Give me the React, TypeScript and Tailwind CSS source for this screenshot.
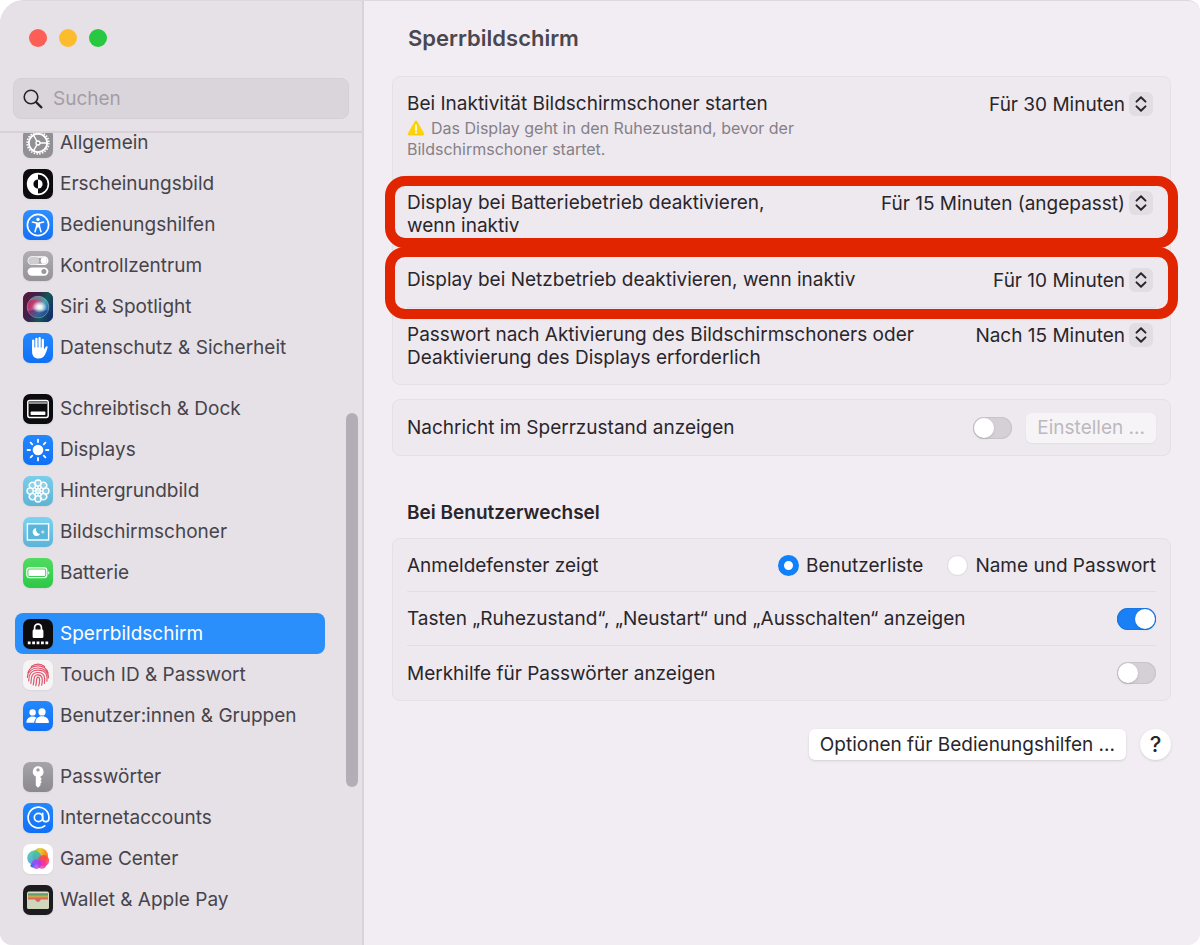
import { useId, useState, type ReactNode } from "react";
import { AtSign } from "lucide-react";
import { clsx } from "clsx";

function GearIcon() {
  return (
    <svg viewBox="0 0 30 30" className="h-full w-full" fill="none" stroke="white">
      <circle cx="15" cy="15" r="10.9" strokeWidth="1.6" strokeDasharray="1.5 1.354" />
      <circle cx="15" cy="15" r="9.2" strokeWidth="1.9" />
      <circle cx="15" cy="15" r="2" strokeWidth="1.3" />
      <path d="M17 15H24M14 13.3L10.5 7.2M14 16.7L10.5 22.8" strokeWidth="1.4" />
    </svg>
  );
}

function AppearanceIcon() {
  return (
    <svg viewBox="0 0 30 30" className="h-full w-full">
      <circle cx="15" cy="15" r="10.4" fill="none" stroke="white" strokeWidth="1.6" />
      <path d="M15 4.6a10.4 10.4 0 0 0 0 20.8v-5.8a4.6 4.6 0 0 1 0-9.2z" fill="white" />
      <path d="M15 10.4a4.6 4.6 0 0 1 0 9.2z" fill="white" />
    </svg>
  );
}

function AccessibilityIcon() {
  return (
    <svg viewBox="0 0 30 30" className="h-full w-full">
      <circle cx="15" cy="15" r="10.6" fill="none" stroke="white" strokeWidth="1.7" />
      <circle cx="15" cy="9.4" r="1.7" fill="white" />
      <path
        d="M9.4 12.1L13.6 13v3.2L12 21.8M20.6 12.1L16.4 13v3.2L18 21.8"
        fill="none"
        stroke="white"
        strokeWidth="1.5"
        strokeLinecap="round"
        strokeLinejoin="round"
      />
      <path d="M13.2 12.4h3.6v5.2h-3.6z" fill="white" />
    </svg>
  );
}

function ControlCenterIcon() {
  return (
    <svg viewBox="0 0 30 30" className="h-full w-full">
      <rect x="5.2" y="6" width="19.6" height="7.4" rx="3.7" fill="#a5a3a7" stroke="white" strokeWidth="1.3" />
      <rect x="5.2" y="6" width="11" height="7.4" rx="3.7" fill="#cfcdd1" />
      <circle cx="20.8" cy="9.7" r="3.1" fill="white" />
      <rect x="4.6" y="16.4" width="20.8" height="8.4" rx="4.2" fill="white" />
      <circle cx="20.9" cy="20.6" r="2.5" fill="#99979b" />
    </svg>
  );
}

function SiriIcon() {
  return (
    <svg viewBox="0 0 30 30" className="h-full w-full">
      <defs>
        <linearGradient id="siri-base" x1="0" y1="0.2" x2="1" y2="0.6">
          <stop offset="0" stopColor="#5a1638" />
          <stop offset="0.4" stopColor="#3a2350" />
          <stop offset="0.7" stopColor="#155654" />
          <stop offset="1" stopColor="#12306a" />
        </linearGradient>
        <linearGradient id="siri-orb" x1="0" y1="0.2" x2="1" y2="0.7">
          <stop offset="0" stopColor="#c22257" />
          <stop offset="0.4" stopColor="#d9588f" />
          <stop offset="0.65" stopColor="#4fb3c0" />
          <stop offset="1" stopColor="#2d62c8" />
        </linearGradient>
        <radialGradient id="siri-glow">
          <stop offset="0" stopColor="white" />
          <stop offset="0.35" stopColor="white" stopOpacity="0.85" />
          <stop offset="1" stopColor="white" stopOpacity="0" />
        </radialGradient>
      </defs>
      <rect width="30" height="30" fill="url(#siri-base)" />
      <circle cx="15" cy="15" r="10.8" fill="url(#siri-orb)" fillOpacity="0.85" stroke="white" strokeOpacity="0.3" />
      <path d="M6 9c5-6 14-6 18 0-5-2-12-2-18 0z" fill="#27b3a0" fillOpacity="0.6" />
      <path d="M5 19c4-1 8-2 11-1 4 1 6 1 9 0-2 8-15 12-20 1z" fill="#1c2a77" fillOpacity="0.5" />
      <ellipse cx="16.5" cy="15" rx="7.6" ry="6" fill="url(#siri-glow)" />
    </svg>
  );
}

function HandIcon() {
  return (
    <svg viewBox="0 0 30 30" className="h-full w-full">
      <path
        d="M10.2 7.6v9M13.4 5.8v10M16.6 5.2v10M19.8 7v10"
        fill="none"
        stroke="white"
        strokeWidth="2.3"
        strokeLinecap="round"
      />
      <path
        d="M9.05 14.4h11.9v2.2l1.7-2.7c.6-1 2.4-.7 1.9.9-.6 2.300-1.400 4.600-2.500 6.600-1.300 2.500-3.300 4.100-6.350 4.100-4.300 0-6.650-2.900-6.650-7.100z"
        fill="white"
      />
    </svg>
  );
}

function DockIcon() {
  return (
    <svg viewBox="0 0 30 30" className="h-full w-full">
      <rect x="4.8" y="6.6" width="20.4" height="16.8" rx="1.8" fill="none" stroke="white" strokeWidth="1.5" />
      <path d="M5.500 8.700h19" stroke="#8d8b8f" strokeWidth="2.400" />
      <rect x="7.6" y="17.6" width="14.800" height="3.400" rx="0.8" fill="white" />
    </svg>
  );
}

function DisplaysIcon() {
  return (
    <svg viewBox="0 0 30 30" className="h-full w-full">
      <circle cx="15" cy="15" r="5.300" fill="white" />
      <path
        d="M15 4.600v2.400M15 23v2.400M4.600 15H7M23 15h2.400M7.600 7.600l1.700 1.700M20.700 20.700l1.700 1.700M22.400 7.600l-1.700 1.700M9.300 20.700l-1.700 1.700"
        stroke="white"
        strokeWidth="1.800"
        strokeLinecap="round"
      />
    </svg>
  );
}

function WallpaperIcon() {
  return (
    <svg viewBox="0 0 30 30" className="h-full w-full" fill="white" fillOpacity="0.2" stroke="white" strokeWidth="1.4">
      {[0, 45, 90, 135, 180, 225, 270, 315].map((angle) => (
        <g key={angle} transform={`rotate(${angle} 15 15)`}>
          <circle cx="15" cy="7.1" r="3.1" />
          <path d="M15 10.2V13" />
        </g>
      ))}
      <circle cx="15" cy="15" r="2.4" fillOpacity="0.7" />
    </svg>
  );
}

function ScreensaverIcon() {
  return (
    <svg viewBox="0 0 30 30" className="h-full w-full">
      <rect x="4.400" y="6.800" width="21.200" height="16.200" fill="#58b5dc" stroke="white" strokeWidth="1.4" />
      <path d="M13.2 10.9a4.1 4.1 0 1 0 4 6.2 4.6 4.6 0 0 1-4-6.2z" fill="white" />
      <path d="M19.8 12.400l.7 1.9 1.9.7-1.9.7-.7 1.9-.7-1.9-1.9-.7 1.9-.7z" fill="white" fillOpacity="0.7" />
    </svg>
  );
}

function BatteryIcon() {
  return (
    <svg viewBox="0 0 30 30" className="h-full w-full">
      <rect x="3.8" y="9.9" width="20" height="9.8" rx="2.6" fill="none" stroke="white" strokeWidth="1.2" />
      <rect x="5.4" y="11.5" width="16.8" height="6.6" rx="1.2" fill="white" />
      <path d="M25.2 13.2c1.6.5 1.6 2.7 0 3.2z" fill="white" />
    </svg>
  );
}

function LockIcon() {
  return (
    <svg viewBox="0 0 30 30" className="h-full w-full" fill="white">
      <path d="M11.6 11.4V8.600a3.400 3.400 0 0 1 6.800 0v2.800" fill="none" stroke="white" strokeWidth="1.7" />
      <rect x="9.600" y="10.600" width="10.800" height="8.400" rx="1.300" />
      <path d="M4.800 22.400h2.800v2.800h-2.800zM9.200 22.400h2.800v2.800h-2.800zM13.600 22.400h2.800v2.800h-2.800zM18 22.400h2.800v2.800h-2.800zM22.400 22.400h2.800v2.800h-2.800z" />
    </svg>
  );
}

function FingerprintIcon() {
  return (
    <svg viewBox="0 0 30 30" className="h-full w-full" fill="none" stroke="#e0566c" strokeWidth="1.2" strokeLinecap="round">
      <path d="M8.400 6.500C12.200 3.200 17.800 3.200 21.600 6.500" />
      <path d="M4.900 12.800C6.300 8.300 10.300 5.900 15 5.900s8.700 2.600 10.100 7.300" />
      <path d="M4.500 17.500C4.300 11.800 9 8 15 8s10.700 4 10.400 9.800" />
      <path d="M5.700 20.800C5.900 18 5.400 10.200 15 10.200c8.800 0 9.600 6 8.900 11" />
      <path d="M7.800 23.400c.9-3.400-.9-10.900 7.200-10.900 6.600 0 7.300 5.300 6.400 10.800" />
      <path d="M10.200 24.900c1.400-4.400-.5-10.100 4.800-10.100 4.600 0 5 4.700 3.700 10.300" />
      <path d="M12.800 25.600c1.200-4.200.1-8.500 2.200-8.500 2.300 0 1.800 5 .7 8.700" />
    </svg>
  );
}

function UsersIcon() {
  return (
    <svg viewBox="0 0 30 30" className="h-full w-full" fill="white">
      <circle cx="9.600" cy="11.400" r="3.200" />
      <path d="M3.400 21.800c0-3.800 2.600-6.200 6.200-6.200 1.600 0 2.900.4 3.900 1.200-1.400 1.200-2.200 3-2.200 5z" />
      <circle cx="19" cy="10.900" r="3.600" />
      <path d="M12.400 21.600c0-3.900 2.600-6.300 6.600-6.300s6.900 2.400 6.900 6.300c0 .3-.3.500-.6.500H13c-.4 0-.6-.2-.6-.5z" />
    </svg>
  );
}

function KeyIcon() {
  return (
    <svg viewBox="0 0 30 30" className="h-full w-full">
      <path
        fillRule="evenodd"
        d="M15 4.200a5.500 5.500 0 0 1 2.500 10.400v1l1.300 1.400-1.300 1.500 1.300 1.500-1.300 1.400v1.800L15 25.800l-2.200-2.300v-8.900A5.500 5.500 0 0 1 15 4.200zm0 2a1.700 1.700 0 1 0 0 3.400 1.700 1.700 0 0 0 0-3.400z"
        fill="white"
      />
    </svg>
  );
}

function GameCenterIcon() {
  return (
    <svg viewBox="0 0 30 30" className="h-full w-full">
      <defs>
        <linearGradient id="gc-top" x1="0" y1="0" x2="1" y2="0.3">
          <stop offset="0" stopColor="#7fd14f" />
          <stop offset="0.5" stopColor="#e8cb2c" />
          <stop offset="1" stopColor="#fb7a27" />
        </linearGradient>
        <linearGradient id="gc-left" x1="0.3" y1="0" x2="0.6" y2="1">
          <stop offset="0" stopColor="#45cb95" />
          <stop offset="1" stopColor="#2f8df8" />
        </linearGradient>
        <linearGradient id="gc-right" x1="0.6" y1="0" x2="0.3" y2="1">
          <stop offset="0" stopColor="#fb4a30" />
          <stop offset="1" stopColor="#f62f9d" />
        </linearGradient>
      </defs>
      <circle cx="17.200" cy="11.800" r="7.800" fill="url(#gc-top)" />
      <circle cx="11.400" cy="13.800" r="7.200" fill="url(#gc-left)" fillOpacity="0.85" />
      <circle cx="20.600" cy="16.600" r="5.600" fill="url(#gc-right)" fillOpacity="0.85" />
      <circle cx="19" cy="20.400" r="4.400" fill="#f62f9d" fillOpacity="0.8" />
      <circle cx="13.400" cy="20.200" r="4.800" fill="#a53df0" fillOpacity="0.8" />
      <circle cx="9.400" cy="21.600" r="2" fill="#4c6bf5" />
    </svg>
  );
}

function WalletIcon() {
  return (
    <svg viewBox="0 0 30 30" className="h-full w-full">
      <rect x="4" y="6.600" width="22" height="17.400" rx="2" fill="#dfd9cc" />
      <path d="M5 8.200h20V13H5z" fill="#5f9e6b" />
      <path d="M5 10.600h20V14H5z" fill="#c9a94b" />
      <path d="M5 12.400h20v3H5z" fill="#d9695a" />
      <path
        d="M4 14.400h7.200c1 0 1.400.5 1.800 1.200.8 1.500 3.200 1.500 4 0 .4-.7.8-1.200 1.800-1.200H26V22a2 2 0 0 1-2 2H6a2 2 0 0 1-2-2z"
        fill="#cfd6bc"
      />
      <path d="M12.600 15h4.800c-.6 2.600-4.200 2.600-4.800 0z" fill="#d9695a" />
    </svg>
  );
}

function WarningIcon() {
  return (
    <svg viewBox="0 0 18 16" className="mr-1.5 inline-block h-4 w-[18px] align-[-2px]" aria-hidden="true">
      <path d="M7.8 1.2a1.4 1.4 0 0 1 2.4 0l7 12.2a1.4 1.4 0 0 1-1.2 2H2a1.4 1.4 0 0 1-1.2-2z" fill="#fdd20a" />
      <path d="M9 5.2v5" stroke="white" strokeWidth="1.6" strokeLinecap="round" />
      <circle cx="9" cy="12.6" r="1" fill="white" />
    </svg>
  );
}

type Item = { label: string; tile: string; icon: ReactNode };

const groups: Item[][] = [
  [
    { label: "Allgemein", tile: "bg-[#929095]", icon: <GearIcon /> },
    { label: "Erscheinungsbild", tile: "bg-[#0c0c0e]", icon: <AppearanceIcon /> },
    { label: "Bedienungshilfen", tile: "bg-linear-to-b from-[#2f8fff] to-[#1371f2]", icon: <AccessibilityIcon /> },
    { label: "Kontrollzentrum", tile: "bg-linear-to-b from-[#b0aeb2] to-[#949296]", icon: <ControlCenterIcon /> },
    { label: "Siri & Spotlight", tile: "bg-[#1b2340]", icon: <SiriIcon /> },
    { label: "Datenschutz & Sicherheit", tile: "bg-linear-to-b from-[#2388ff] to-[#1070f5]", icon: <HandIcon /> },
  ],
  [
    { label: "Schreibtisch & Dock", tile: "bg-[#0c0c0e]", icon: <DockIcon /> },
    { label: "Displays", tile: "bg-linear-to-b from-[#2388ff] to-[#1070f5]", icon: <DisplaysIcon /> },
    { label: "Hintergrundbild", tile: "bg-linear-to-b from-[#78cfea] to-[#5fb3d4]", icon: <WallpaperIcon /> },
    { label: "Bildschirmschoner", tile: "bg-linear-to-b from-[#7ad3f0] to-[#5bb4d9]", icon: <ScreensaverIcon /> },
    { label: "Batterie", tile: "bg-linear-to-b from-[#4fdc61] to-[#2cc845]", icon: <BatteryIcon /> },
  ],
  [
    { label: "Sperrbildschirm", tile: "bg-[#0c0c0e]", icon: <LockIcon /> },
    { label: "Touch ID & Passwort", tile: "bg-[#f6f4f5]", icon: <FingerprintIcon /> },
    { label: "Benutzer:innen & Gruppen", tile: "bg-linear-to-b from-[#2388ff] to-[#1070f5]", icon: <UsersIcon /> },
  ],
  [
    { label: "Passwörter", tile: "bg-linear-to-b from-[#a6a4a8] to-[#8b898d]", icon: <KeyIcon /> },
    {
      label: "Internetaccounts",
      tile: "bg-linear-to-b from-[#2388ff] to-[#1070f5]",
      icon: <AtSign size={25} color="white" strokeWidth={1.6} />,
    },
    { label: "Game Center", tile: "bg-white", icon: <GameCenterIcon /> },
    { label: "Wallet & Apple Pay", tile: "bg-[#1c1c1e]", icon: <WalletIcon /> },
  ],
];

function Sidebar() {
  const [active, setActive] = useState("Sperrbildschirm");

  return (
    <aside className="flex w-[364px] shrink-0 flex-col border-r-2 border-[#d9d4da] bg-[#e5e1e6]">
      <div className="relative z-10 border-b-2 border-[#d6d2d7] bg-[#e5e1e6] px-[13px] pt-7 pb-3">
        <div className="flex gap-3 pl-4">
          <button aria-label="Schließen" className="size-[18px] rounded-full bg-[#fd5f57]" />
          <button aria-label="Minimieren" className="size-[18px] rounded-full bg-[#fdbc2e]" />
          <button aria-label="Maximieren" className="size-[18px] rounded-full bg-[#28c840]" />
        </div>
        <label className="mt-[31px] flex h-[41px] items-center gap-[10px] rounded-lg border border-[#d4cfd5] bg-[#dad5db] px-[9px]">
          <svg viewBox="0 0 20 20" className="size-5 shrink-0" fill="none" stroke="#262428" strokeLinecap="round">
            <circle cx="8" cy="8" r="6.8" strokeWidth="1.6" />
            <path d="M13.1 13.1L18.4 18.4" strokeWidth="2.2" />
          </svg>
          <input
            type="search"
            placeholder="Suchen"
            aria-label="Suchen"
            className="w-full min-w-0 bg-transparent outline-none placeholder:text-[#a39ea5]"
          />
        </label>
      </div>
      <div className="relative min-h-0 flex-1">
        <nav className="-mt-[11px] flex flex-col gap-5 pr-[37px] pl-[15px]">
          {groups.map((group) => (
            <ul key={group[0].label}>
              {group.map(({ label, tile, icon }) => (
                <li key={label}>
                  <a
                    href="#"
                    onClick={() => setActive(label)}
                    aria-current={active === label ? "page" : undefined}
                    className={clsx(
                      "flex h-[41px] items-center gap-[7px] rounded-lg px-2 whitespace-nowrap",
                      active === label ? "bg-[#2b8ffb] text-white" : "text-[#48444b]",
                    )}
                  >
                    <span
                      className={clsx(
                        "flex size-[30px] shrink-0 items-center justify-center overflow-hidden rounded-[7px] shadow-xs",
                        tile,
                      )}
                    >
                      {icon}
                    </span>
                    {label}
                  </a>
                </li>
              ))}
            </ul>
          ))}
        </nav>
        {/* Scroll thumb */}
        <div className="absolute top-[280px] right-1 h-[46%] w-3 rounded-full bg-[#b3aeb5]" />
      </div>
    </aside>
  );
}

function Card({ children }: { children: ReactNode }) {
  return (
    <div className="divide-y divide-[#e3dee4] rounded-lg border border-[#e5e0e6] bg-[#eee9ef] px-[14px]">{children}</div>
  );
}

type SelectRowProps = {
  label: string;
  value: string;
  note?: ReactNode;
  ring?: string;
};

function SelectRow({ label, value, note, ring }: SelectRowProps) {
  const id = useId();

  return (
    <div className="relative flex items-start justify-between gap-4 py-[15px]">
      <div>
        <label htmlFor={id} className="block max-w-[510px] whitespace-pre-line">
          {label}
        </label>
        {note}
      </div>
      <div className="relative mr-[3px] flex h-6 shrink-0 items-center">
        <select id={id} className="appearance-none bg-transparent pr-7 text-right outline-none">
          <option>{value}</option>
        </select>
        <span className="pointer-events-none absolute right-0 flex size-6 items-center justify-center rounded-md bg-[#e2dde3]">
          <svg viewBox="0 0 12 18" className="h-[18px] w-3" fill="none" stroke="#262428" strokeWidth="2">
            <path d="M1.5 6.6L6 2.2l4.5 4.4M1.5 11.4L6 15.8l4.5-4.4" strokeLinecap="round" strokeLinejoin="round" />
          </svg>
        </span>
      </div>
      {ring && (
        <div
          className={clsx(
            "pointer-events-none absolute -inset-x-[22px] h-[72px] rounded-[20px] border-10 border-[#e12500]",
            ring,
          )}
        />
      )}
    </div>
  );
}

function Toggle({ id, defaultChecked }: { id: string; defaultChecked?: boolean }) {
  return (
    <input
      id={id}
      type="checkbox"
      role="switch"
      defaultChecked={defaultChecked}
      className="flex h-[22px] w-[39px] shrink-0 appearance-none items-center rounded-full bg-[#d5d0d6] p-px inset-ring inset-ring-[#c9c4ca] before:size-5 before:rounded-full before:bg-white before:shadow-sm checked:justify-end checked:bg-[#1a80f5] checked:inset-ring-[#1a76e2]"
    />
  );
}

function Radio({ label, defaultChecked }: { label: string; defaultChecked?: boolean }) {
  return (
    <label className="flex items-center gap-[7px]">
      <input
        type="radio"
        name="login-window"
        defaultChecked={defaultChecked}
        className="size-[21px] appearance-none rounded-full border border-[#dcd7dd] bg-white checked:border-6 checked:border-[#1180fb]"
      />
      {label}
    </label>
  );
}

export default function App() {
  return (
    <div className="bg-white font-[Inter,sans-serif] text-[19px] leading-[23px] text-[#29262b]">
      <div className="flex h-screen overflow-hidden rounded-tl-3xl rounded-tr-xl rounded-b-xl border-t border-[#dcd8dd] bg-[#f2edf3]">
        <Sidebar />
        <main className="min-w-0 flex-1 pt-[23px] pr-[29px] pl-7">
          <h1 className="mb-6 pl-4 text-[22px] leading-7 font-semibold text-[#4b474e]">Sperrbildschirm</h1>

          <Card>
            <SelectRow
              label="Bei Inaktivität Bildschirmschoner starten"
              value="Für 30 Minuten"
              note={
                <p className="mt-[3px] max-w-[410px] text-base leading-[21px] text-[#858087]">
                  <WarningIcon />
                  Das Display geht in den Ruhezustand, bevor der Bildschirmschoner startet.
                </p>
              }
            />
            <SelectRow
              label={"Display bei Batteriebetrieb deaktivieren,\nwenn inaktiv"}
              value="Für 15 Minuten (angepasst)"
              ring="top-0"
            />
            <SelectRow
              label="Display bei Netzbetrieb deaktivieren, wenn inaktiv"
              value="Für 10 Minuten"
              ring="-top-[6px]"
            />
            <SelectRow
              label="Passwort nach Aktivierung des Bildschirmschoners oder Deaktivierung des Displays erforderlich"
              value="Nach 15 Minuten"
            />
          </Card>

          <div className="mt-[14px]">
            <Card>
              <div className="flex min-h-[55px] items-center gap-[14px]">
                <label htmlFor="lock-message" className="flex-1">
                  Nachricht im Sperrzustand anzeigen
                </label>
                <Toggle id="lock-message" />
                <button disabled className="h-[30px] rounded-md bg-[#f7f4f8] px-[11px] text-[#bdb8be] shadow-xs">
                  Einstellen ...
                </button>
              </div>
            </Card>
          </div>

          <h2 className="mt-[45px] mb-[14px] pl-[15px] font-semibold">Bei Benutzerwechsel</h2>

          <Card>
            <div role="radiogroup" aria-label="Anmeldefenster zeigt" className="flex min-h-[53px] items-center gap-6">
              <span className="flex-1">Anmeldefenster zeigt</span>
              <Radio label="Benutzerliste" defaultChecked />
              <Radio label="Name und Passwort" />
            </div>
            <div className="flex min-h-[54px] items-center justify-between">
              <label htmlFor="show-buttons">Tasten „Ruhezustand“, „Neustart“ und „Ausschalten“ anzeigen</label>
              <Toggle id="show-buttons" defaultChecked />
            </div>
            <div className="flex min-h-[54px] items-center justify-between">
              <label htmlFor="show-hints">Merkhilfe für Passwörter anzeigen</label>
              <Toggle id="show-hints" />
            </div>
          </Card>

          <div className="mt-7 flex items-center justify-end gap-[14px]">
            <button className="h-[31px] rounded-md bg-white px-[11px] shadow-sm">Optionen für Bedienungshilfen ...</button>
            <button aria-label="Hilfe" className="size-[31px] rounded-full bg-white text-[22px] font-medium shadow-sm">
              ?
            </button>
          </div>
        </main>
      </div>
    </div>
  );
}
